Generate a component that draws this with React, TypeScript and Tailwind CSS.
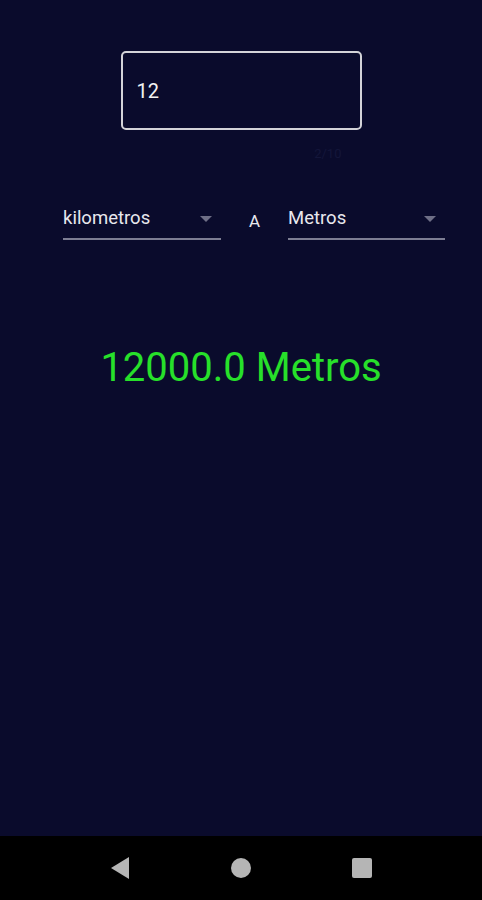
import React from 'react';

const Dropdown: React.FC<{ label: string; width: string }> = ({ label, width }) => (
    <div className={`${width} flex flex-col`}>
        <div className="h-[38px] flex items-center justify-between pr-[9px]">
            <span className="text-[18.5px] text-[#e8e8ee]">{label}</span>
            <span className="w-0 h-0 border-l-[6px] border-r-[6px] border-t-[6px] border-l-transparent border-r-transparent border-t-[#6e6f86]" />
        </div>
        <div className="h-[2px] bg-[#7d7e93]" />
    </div>
);

export default function App() {
    return (
        <div className="w-[482px] h-[900px] flex flex-col bg-[#0a0b2c] font-['Roboto',sans-serif]">
            <main className="flex-1 flex flex-col">
                <div className="mt-[51px] mx-auto w-[241px] h-[79px] border-2 border-[#d3d3d8] rounded-[5px] flex items-center px-[14px]">
                    <span className="text-[20px] text-[#f2f2f2] leading-none">12</span>
                </div>
                <div className="w-[241px] mx-auto flex justify-end pr-[20px] h-[30px] items-end">
                    <span className="text-[13px] text-[#14163a] leading-none">2/10</span>
                </div>

                <div className="mt-[40px] flex items-end pl-[63px]">
                    <Dropdown label="kilometros" width="w-[158px]" />
                    <div className="w-[67px] h-[40px] flex items-center justify-center">
                        <span className="text-[17px] text-[#e8e8ee] mt-[4px]">A</span>
                    </div>
                    <Dropdown label="Metros" width="w-[157px]" />
                </div>

                <div className="mt-[98px] flex justify-center">
                    <span className="text-[40px] text-[#27e02a] leading-[60px]">12000.0 Metros</span>
                </div>
            </main>

            <nav className="h-[64px] bg-black flex items-center justify-center">
                <div className="flex items-center gap-[101px]">
                    <svg width="20" height="22" viewBox="0 0 20 22">
                        <polygon points="19,0 19,22 1,11" fill="#b5b5b5" />
                    </svg>
                    <span className="w-[20px] h-[20px] rounded-full bg-[#b5b5b5]" />
                    <span className="w-[20px] h-[20px] rounded-[2px] bg-[#b5b5b5]" />
                </div>
            </nav>
        </div>
    );
}
